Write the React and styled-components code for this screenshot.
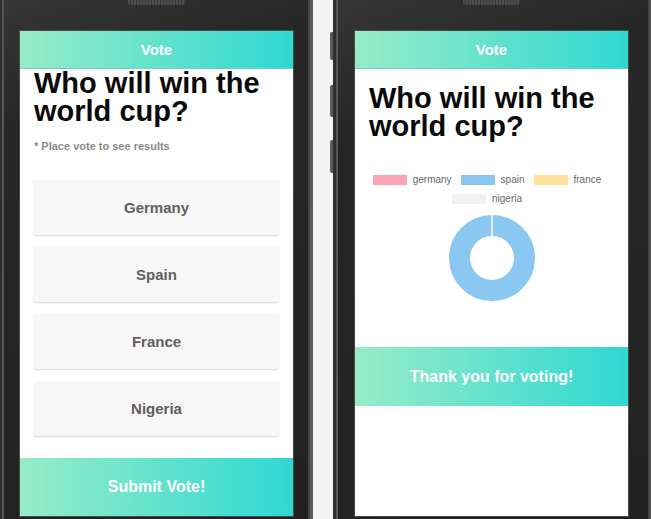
import React from "react";
import styled, { createGlobalStyle } from "styled-components";

const GlobalStyle = createGlobalStyle`
  html, body {
    margin: 0;
    padding: 0;
    background: #f3f3f3;
  }
  body {
    font-family: "Liberation Sans", Arial, sans-serif;
  }
`;

const Stage = styled.div`
  display: flex;
  align-items: flex-start;
  width: 651px;
  height: 519px;
  overflow: hidden;
  background: #f3f3f3;
`;

const Phone = styled.div`
  flex: none;
  display: flex;
  flex-direction: column;
  align-items: center;
  width: ${(p) => p.$width}px;
  height: 519px;
  margin-left: ${(p) => p.$offset || 0}px;
  padding: 0 ${(p) => p.$padRight}px 0 ${(p) => p.$padLeft}px;
  box-sizing: border-box;
  background: linear-gradient(160deg, #363636 0%, #262626 22%, #222 100%);
  box-shadow: inset 3px 0 0 #2e2e2e, inset 5px 0 0 #575757,
    inset -3px 0 0 #5c5c5c, inset -5px 0 0 #444;
`;

const Grille = styled.div`
  width: 57px;
  height: 5px;
  border-radius: 0 0 3px 3px;
  background: repeating-linear-gradient(90deg, #4d4d4d 0 2px, #3c3c3c 2px 3px);
`;

const Screen = styled.div`
  display: flex;
  flex-direction: column;
  width: 273px;
  height: 485px;
  margin-top: 26px;
  background: #fff;
  box-shadow: 0 0 0 1px #4a4a4a;
`;

const Header = styled.div`
  flex: none;
  height: 37px;
  display: flex;
  align-items: center;
  justify-content: center;
  background: linear-gradient(90deg, #97ecc7 0%, #2fd8d3 100%);
  border-bottom: 1px solid #6fcfc0;
  color: #fff;
  font-size: 15px;
  font-weight: bold;
`;

const Body = styled.div`
  padding: 0 14px;
`;

const Title = styled.h1`
  margin: ${(p) => p.$top}px 0 0;
  font-size: 29px;
  line-height: 28px;
  font-weight: bold;
  color: #0a0a0a;
`;

const Hint = styled.p`
  margin: 15px 0 0;
  font-size: 11px;
  line-height: 13px;
  font-weight: bold;
  color: #8a8a8a;
`;

const Options = styled.div`
  display: flex;
  flex-direction: column;
  gap: 12px;
  margin-top: 27px;
`;

const Option = styled.button`
  height: 55px;
  border: none;
  border-radius: 2px;
  background: #f7f7f7;
  box-shadow: 0 1px 2px rgba(0, 0, 0, 0.16);
  font-family: inherit;
  font-size: 15px;
  font-weight: bold;
  color: #606060;
`;

const ActionBar = styled.div`
  flex: none;
  height: ${(p) => p.$height}px;
  margin-top: ${(p) => (p.$top != null ? `${p.$top}px` : "auto")};
  display: flex;
  align-items: center;
  justify-content: center;
  background: linear-gradient(90deg, #97ecc7 0%, #2fd8d3 100%);
  color: #fff;
  font-size: 16px;
  font-weight: bold;
`;

const Legend = styled.div`
  margin-top: 30px;
  display: flex;
  flex-wrap: wrap;
  justify-content: center;
  padding: 0 8px;
`;

const LegendRow = styled.div`
  display: flex;
  justify-content: center;
  width: 100%;
`;

const LegendItem = styled.div`
  display: flex;
  align-items: center;
  gap: 6px;
  height: 19px;
  padding-right: 9px;
  font-size: 10px;
  color: #666;
`;

const Swatch = styled.span`
  width: 34px;
  height: 10px;
  background: ${(p) => p.$color};
`;

const ChartBox = styled.div`
  display: flex;
  justify-content: center;
  margin-top: 7px;
`;

const SideKeys = styled.div`
  flex: none;
  display: flex;
  flex-direction: column;
  width: 3px;
  margin-left: 17px;
`;

const SideKey = styled.span`
  height: ${(p) => p.$h}px;
  margin-top: ${(p) => p.$top}px;
  border-radius: 2px 0 0 2px;
  background: #5a5a5a;
`;

const countries = ["Germany", "Spain", "France", "Nigeria"];

const legendRows = [
  [
    { label: "germany", color: "#ffa3b6" },
    { label: "spain", color: "#8bc8f1" },
    { label: "france", color: "#ffe19c" },
  ],
  [{ label: "nigeria", color: "#f0f1f3" }],
];

function Donut() {
  return (
    <svg width="86" height="86" viewBox="0 0 86 86">
      <circle cx="43" cy="43" r="32.5" fill="none" stroke="#8bc8f1" strokeWidth="21" />
      <line x1="43" y1="0" x2="43" y2="22" stroke="#fff" strokeWidth="1.5" />
    </svg>
  );
}

export default function App() {
  return (
    <>
      <GlobalStyle />
      <Stage>
        <Phone $width={314} $offset={-1} $padLeft={21} $padRight={20}>
          <Grille />
          <Screen>
            <Header>Vote</Header>
            <Body>
              <Title $top={0}>Who will win the world cup?</Title>
              <Hint>* Place vote to see results</Hint>
              <Options>
                {countries.map((c) => (
                  <Option key={c}>{c}</Option>
                ))}
              </Options>
            </Body>
            <ActionBar $height={58}>Submit Vote!</ActionBar>
          </Screen>
        </Phone>

        <SideKeys>
          <SideKey $top={32} $h={28} />
          <SideKey $top={25} $h={32} />
          <SideKey $top={23} $h={33} />
        </SideKeys>

        <Phone $width={320} $padLeft={22} $padRight={25}>
          <Grille />
          <Screen>
            <Header>Vote</Header>
            <Body>
              <Title $top={15}>Who will win the world cup?</Title>
            </Body>
            <Legend>
              {legendRows.map((row, i) => (
                <LegendRow key={i}>
                  {row.map((item) => (
                    <LegendItem key={item.label}>
                      <Swatch $color={item.color} />
                      {item.label}
                    </LegendItem>
                  ))}
                </LegendRow>
              ))}
            </Legend>
            <ChartBox>
              <Donut />
            </ChartBox>
            <ActionBar $height={59} $top={46}>
              Thank you for voting!
            </ActionBar>
          </Screen>
        </Phone>
      </Stage>
    </>
  );
}
